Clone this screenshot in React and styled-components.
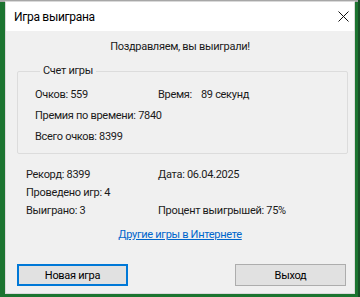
import styled, { createGlobalStyle } from "styled-components";

const GlobalStyle = createGlobalStyle`
  html, body {
    margin: 0;
    padding: 0;
  }
  body {
    background: #1c7430;
    font-family: Roboto, "Noto Sans", sans-serif;
    font-size: 11px;
    letter-spacing: -0.3px;
    color: #1a1a1a;
  }
`;

const Desktop = styled.div`
  width: 360px;
  height: 297px;
  box-sizing: border-box;
  padding: 2px 6px 0 6px;
  background: linear-gradient(#a7a7a7 0 2px, #1c7430 2px);
  border-right: 2px solid #174f27;
`;

const Dialog = styled.div`
  width: 348px;
  height: 291px;
  display: flex;
  flex-direction: column;
  background: #f0f0f0;
  box-shadow: 0 0 0 1px #d9d9d9;
`;

const TitleBar = styled.div`
  height: 29px;
  flex: none;
  display: flex;
  align-items: center;
  justify-content: space-between;
  padding: 0 0 0 8px;
  background: #ffffff;
`;

const Title = styled.span`
  font-size: 12px;
  color: #000;
`;

const CloseButton = styled.button`
  width: 22px;
  height: 22px;
  border: 0;
  padding: 0;
  background: transparent;
  display: flex;
  align-items: center;
  justify-content: center;
`;

const Body = styled.div`
  flex: 1;
  display: flex;
  flex-direction: column;
  padding: 8px 6px 0 11px;
`;

const Heading = styled.div`
  text-align: center;
  line-height: 16px;
  padding-right: 5px;
  margin-bottom: 8px;
`;

const Group = styled.fieldset`
  margin: 0;
  padding: 8px 18px 8px 17px;
  border: 1px solid #dcdcdc;
  border-radius: 2px;
  display: grid;
  grid-template-columns: 123px 1fr;
  row-gap: 5px;
`;

const Legend = styled.legend`
  padding: 0 3px;
  margin-left: 5px;
  line-height: 16px;
`;

const Cell = styled.div`
  line-height: 16px;
  grid-column: ${(p) => (p.$wide ? "1 / -1" : "auto")};
`;

const Value = styled.span`
  margin-left: ${(p) => p.$gap || 4}px;
`;

const Stats = styled.div`
  display: grid;
  grid-template-columns: 132px 1fr;
  row-gap: 2px;
  padding: 13px 0 0 9px;
`;

const LinkRow = styled.div`
  text-align: center;
  padding: 8px 5px 0 0;
  line-height: 16px;
`;

const Link = styled.a`
  color: #0066cc;
  text-decoration: underline;
  cursor: pointer;
`;

const Buttons = styled.div`
  display: flex;
  justify-content: space-between;
  padding: 21px 2px 0 0;
`;

const Button = styled.button`
  width: 111px;
  height: 22px;
  box-sizing: border-box;
  font-family: inherit;
  font-size: 11px;
  letter-spacing: inherit;
  color: #000;
  background: #e1e1e1;
  border: 1px solid ${(p) => (p.$default ? "#0078d7" : "#adadad")};
  box-shadow: ${(p) => (p.$default ? "inset 0 0 0 1px #0078d7" : "none")};
  padding: 0;
`;

export default function App() {
  return (
    <>
      <GlobalStyle />
      <Desktop>
        <Dialog>
          <TitleBar>
            <Title>Игра выиграна</Title>
            <CloseButton aria-label="Закрыть">
              <svg width="11" height="11" viewBox="0 0 11 11">
                <path d="M0.5 0.5 L10.5 10.5 M10.5 0.5 L0.5 10.5" stroke="#111" strokeWidth="1" />
              </svg>
            </CloseButton>
          </TitleBar>
          <Body>
            <Heading>Поздравляем, вы выиграли!</Heading>
            <Group>
              <Legend>Счет игры</Legend>
              <Cell>Очков: 559</Cell>
              <Cell>
                Время:<Value $gap={9}>89 секунд</Value>
              </Cell>
              <Cell $wide>Премия по времени: 7840</Cell>
              <Cell $wide>Всего очков: 8399</Cell>
            </Group>
            <Stats>
              <Cell>Рекорд: 8399</Cell>
              <Cell>Дата: 06.04.2025</Cell>
              <Cell $wide>Проведено игр: 4</Cell>
              <Cell>Выиграно: 3</Cell>
              <Cell>Процент выигрышей: 75%</Cell>
            </Stats>
            <LinkRow>
              <Link>Другие игры в Интернете</Link>
            </LinkRow>
            <Buttons>
              <Button $default>Новая игра</Button>
              <Button>Выход</Button>
            </Buttons>
          </Body>
        </Dialog>
      </Desktop>
    </>
  );
}
